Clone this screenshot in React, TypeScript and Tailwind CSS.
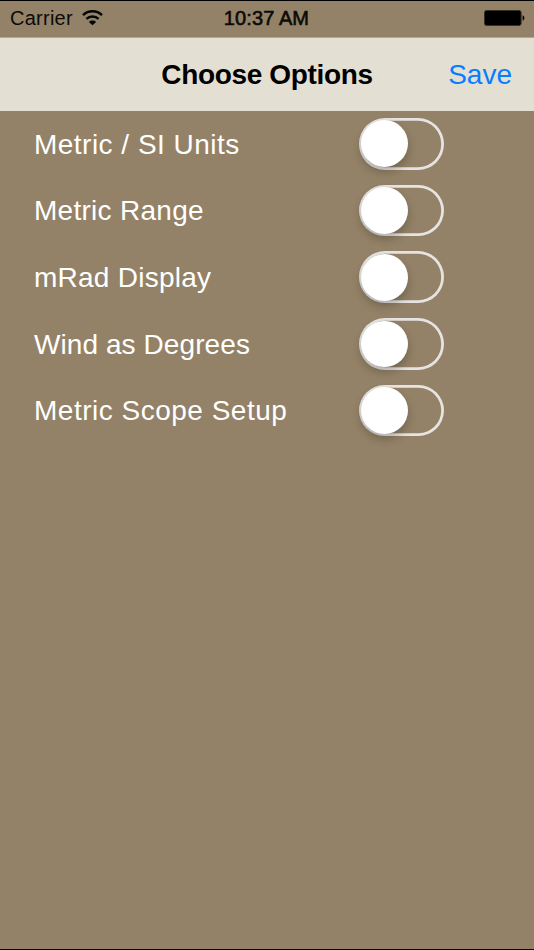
import React, { useState } from 'react';

type Option = { id: string; label: string; tracking: string };

const OPTIONS: Option[] = [
  { id: 'metric-units', label: 'Metric / SI Units', tracking: 'tracking-[0.48px]' },
  { id: 'metric-range', label: 'Metric Range', tracking: 'tracking-[0.28px]' },
  { id: 'mrad', label: 'mRad Display', tracking: 'tracking-[0.25px]' },
  { id: 'wind-degrees', label: 'Wind as Degrees', tracking: 'tracking-[0.08px]' },
  { id: 'metric-scope', label: 'Metric Scope Setup', tracking: 'tracking-[0.5px]' },
];

const WifiIcon: React.FC = () => (
  <svg className="ml-[9px] h-[16px] w-[21px]" viewBox="0 0 21 16" fill="none" stroke="#050505" strokeWidth="2.5">
    <path d="M1 5.1C6.5.1 14.5.1 20 5.1" />
    <path d="M4.4 8.8c3.5-3.2 8.7-3.2 12.2 0" />
    <path d="M10.5 15.3 6.9 11.9c2-1.9 5.2-1.9 7.2 0z" fill="#050505" stroke="none" />
  </svg>
);

const BatteryIcon: React.FC = () => (
  <svg className="h-[17px] w-[41px]" viewBox="0 0 41 17">
    <rect x="0.5" y="0.5" width="36.6" height="15" rx="2" fill="#000" stroke="#37301f" />
    <path d="M38.6 5.3c2.4 1 2.4 4.4 0 5.4z" fill="#000" />
  </svg>
);

const StatusBar: React.FC = () => (
  <div className="grid h-[37px] grid-cols-3 items-center border-t border-black pb-[2px] pl-[10px] pr-[9px] text-[#0c0a07]">
    <div className="flex items-center">
      <span className="text-[20px] leading-none tracking-[0.25px]">Carrier</span>
      <WifiIcon />
    </div>
    <span className="-ml-[2px] whitespace-nowrap text-center text-[20px] leading-none tracking-[0.1px] [-webkit-text-stroke:0.6px]">10:37 AM</span>
    <div className="flex justify-end">
      <BatteryIcon />
    </div>
  </div>
);

const Toggle: React.FC<{ label: string; checked: boolean; onChange: () => void }> = ({ label, checked, onChange }) => (
  <button
    type="button"
    role="switch"
    aria-label={label}
    aria-checked={checked}
    onClick={onChange}
    className={`flex h-[51.6px] w-[85px] items-center rounded-full px-[2.4px] shadow-[inset_0_0_0_2.8px_#e6e3e3] ${checked ? 'justify-end bg-[#4cd964]' : 'justify-start'}`}
  >
    <span className="h-[46.8px] w-[46.8px] rounded-full bg-white shadow-[0_5px_10px_rgba(0,0,0,0.24)]" />
  </button>
);

const App: React.FC = () => {
  const [enabled, setEnabled] = useState<Record<string, boolean>>({});

  const toggle = (id: string) => setEnabled((prev) => ({ ...prev, [id]: !prev[id] }));

  return (
    <div className="flex h-[950px] w-[534px] flex-col overflow-hidden border-b border-black bg-[#938267] font-['Liberation_Sans',Arial,sans-serif]">
      <StatusBar />
      <header className="grid h-[74px] grid-cols-[1fr_auto_1fr] items-center border-t border-[#b5a892] bg-[#e4dfd3] px-[22px]">
        <span />
        <h1 className="text-[28px] font-bold leading-none tracking-[-0.35px] text-black">Choose Options</h1>
        <button type="button" className="justify-self-end text-[28px] leading-none text-[#087eff]">Save</button>
      </header>
      <main className="-mt-[0.5px] pl-[34px] pr-[90.2px]">
        {OPTIONS.map(({ id, label, tracking }) => (
          <div key={id} className="flex h-[66.7px] items-center justify-between">
            <span className={`pt-[1.4px] text-[28px] leading-none text-white ${tracking}`}>{label}</span>
            <Toggle label={label} checked={Boolean(enabled[id])} onChange={() => toggle(id)} />
          </div>
        ))}
      </main>
    </div>
  );
};

export default App;
